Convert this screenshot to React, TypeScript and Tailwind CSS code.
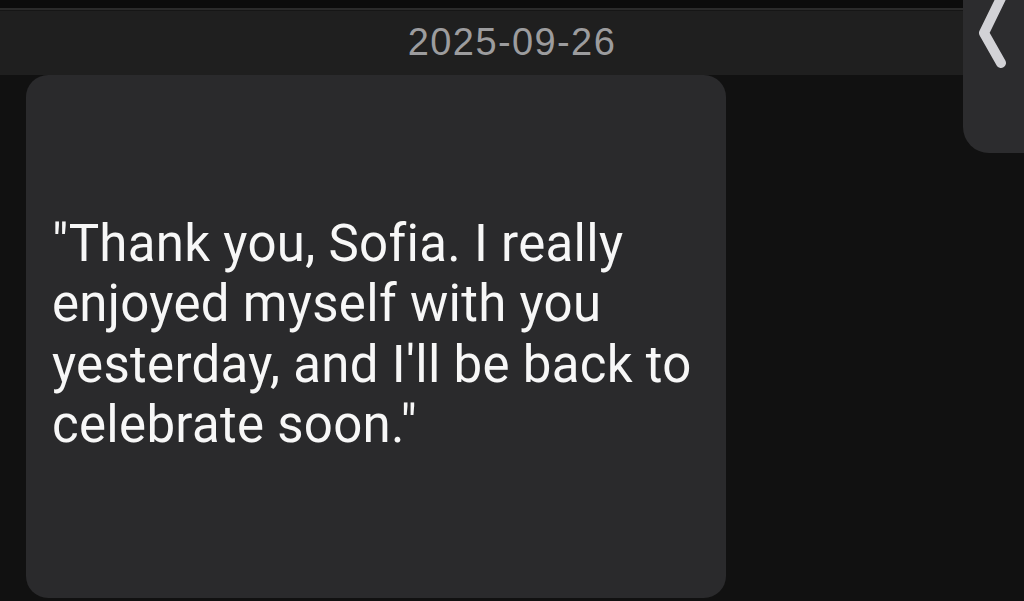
import React from "react"

const lines = [
  "\"Thank you, Sofia. I really",
  "enjoyed myself with you",
  "yesterday, and I'll be back to",
  "celebrate soon.\"",
]

const Chevron: React.FC = () => (
  <svg width="61" height="153" viewBox="0 0 61 153" className="block">
    <path
      d="M40 -6 L21 33 L38 63"
      fill="none"
      stroke="#d2d2d6"
      strokeWidth="10"
      strokeLinecap="round"
      strokeLinejoin="round"
    />
  </svg>
)

const App: React.FC = () => {
  return (
    <div className="relative h-[601px] w-[1024px] overflow-hidden bg-[#111111] font-['Roboto',sans-serif]">
      <div className="h-[8px] bg-[#0c0c0c]" />
      <div className="h-[2px] bg-[#2b2b2b]" />
      <div className="h-[1px] bg-[#161616]" />
      <div className="flex h-[64px] items-center justify-center bg-[#1f1f1f]">
        <span className="pb-[2px] font-['Liberation_Sans',sans-serif] text-[38px] leading-none tracking-[1.4px] text-[#9c9c9e]">
          2025-09-26
        </span>
      </div>

      <div className="flex pl-[26px]">
        <div className="flex h-[523px] w-[700px] items-center rounded-[22px] bg-[#2a2a2c] px-[26px]">
          <p className="mt-[-4px] text-[51px] leading-[60.5px] tracking-[0.3px] text-[#f7f7f7]">
            {lines.map(l => (
              <span key={l} className="block whitespace-nowrap">
                {l}
              </span>
            ))}
          </p>
        </div>
      </div>

      <div className="absolute right-0 top-0 h-[153px] w-[61px] rounded-bl-[26px] bg-[#2c2c2e]">
        <Chevron />
      </div>
    </div>
  )
}

export default App
